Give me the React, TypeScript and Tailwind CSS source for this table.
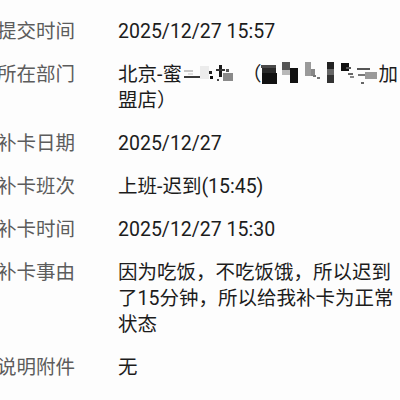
import React from 'react';

type Row = { label: string; value: React.ReactNode };

// 打码区域：用小方块拼出像素马赛克
function MosaicA() {
  return (
    <svg width="60" height="26" viewBox="0 0 60 26" className="inline-block align-top" aria-hidden>
      <rect x="2" y="8" width="9" height="2" fill="#c8c8c8" />
      <rect x="2" y="14" width="16" height="2" fill="#3a3a3a" />
      <rect x="6" y="11" width="5" height="2" fill="#e0e0e0" />
      <rect x="18" y="4" width="9" height="13" fill="#ececec" />
      <rect x="27" y="9" width="3" height="3" fill="#222" />
      <rect x="28" y="14" width="3" height="3" fill="#111" />
      <rect x="35" y="17" width="2" height="2" fill="#444" />
      <rect x="37" y="3" width="3" height="12" fill="#1a1a1a" />
      <rect x="34" y="7" width="9" height="2" fill="#333" />
      <rect x="41" y="11" width="10" height="8" fill="#8a8a8a" />
      <rect x="44" y="7" width="3" height="3" fill="#555" />
    </svg>
  );
}

function MosaicB() {
  return (
    <svg width="117" height="26" viewBox="0 0 117 26" className="inline-block align-top" aria-hidden>
      <rect x="0" y="3" width="15" height="3" fill="#4a4a4a" />
      <rect x="1" y="6" width="14" height="5" fill="#2a2a2a" />
      <rect x="1" y="11" width="15" height="11" fill="#111" />
      <rect x="21" y="0" width="8" height="8" fill="#555" />
      <rect x="21" y="8" width="8" height="5" fill="#b8b8b8" />
      <rect x="29" y="6" width="8" height="15" fill="#111" />
      <rect x="44" y="0" width="6" height="14" fill="#9a9a9a" />
      <rect x="50" y="7" width="4" height="7" fill="#888" />
      <rect x="52" y="13" width="3" height="2" fill="#777" />
      <rect x="56" y="15" width="3" height="2" fill="#777" />
      <rect x="66" y="0" width="7" height="7" fill="#222" />
      <rect x="66" y="7" width="7" height="6" fill="#666" />
      <rect x="66" y="13" width="7" height="8" fill="#333" />
      <rect x="80" y="1" width="8" height="8" fill="#111" />
      <rect x="85" y="5" width="5" height="2" fill="#555" />
      <rect x="87" y="11" width="5" height="2" fill="#666" />
      <rect x="89" y="14" width="4" height="2" fill="#888" />
      <rect x="96" y="6" width="13" height="2" fill="#555" />
      <rect x="97" y="12" width="10" height="2" fill="#777" />
      <rect x="104" y="10" width="12" height="7" fill="#9a9a9a" />
      <rect x="100" y="20" width="3" height="2" fill="#666" />
    </svg>
  );
}

const rows: Row[] = [
  { label: '提交时间', value: '2025/12/27 15:57' },
  {
    label: '所在部门',
    value: (
      <>
        <span className="block whitespace-nowrap">
          北京-蜜<MosaicA />（<MosaicB />加
        </span>
        <span className="block">盟店）</span>
      </>
    ),
  },
  { label: '补卡日期', value: '2025/12/27' },
  { label: '补卡班次', value: '上班-迟到(15:45)' },
  { label: '补卡时间', value: '2025/12/27 15:30' },
  { label: '补卡事由', value: '因为吃饭，不吃饭饿，所以迟到了15分钟，所以给我补卡为正常状态' },
  { label: '说明附件', value: '无' },
];

export default function App() {
  return (
    <div className="h-[400px] w-[400px] overflow-hidden bg-[#fdfdfd] pt-[10px] font-['Roboto','Noto_Sans_CJK_SC',sans-serif] text-[19.5px] leading-[26px]">
      <div className="-ml-[3px]">
        {rows.map((r) => (
          <div key={r.label} className="flex py-[8.5px]">
            <span className="w-[121px] shrink-0 text-[#5c5c5c]">{r.label}</span>
            <div className="w-[284px] shrink-0 text-[#1c1c1c]">{r.value}</div>
          </div>
        ))}
      </div>
    </div>
  );
}
